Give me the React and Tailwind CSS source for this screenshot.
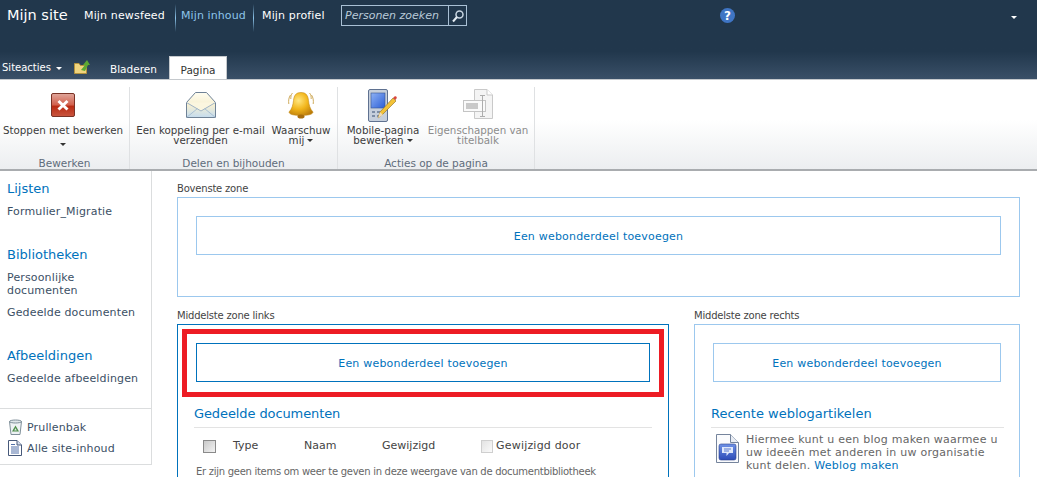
function Caret({ className = 'border-t-[#333]' }) {
    return <span className={`inline-block w-0 h-0 border-x-[3px] border-x-transparent border-t-[3px] ${className}`} />
}

function StopIcon() {
    return (
        <svg width="24" height="24" viewBox="0 0 24 24">
            <defs>
                <linearGradient id="stopBg" x1="0" y1="0" x2="0" y2="1">
                    <stop offset="0" stopColor="#e0a79c" />
                    <stop offset="0.5" stopColor="#d2604c" />
                    <stop offset="0.55" stopColor="#b92a12" />
                    <stop offset="1" stopColor="#c9563f" />
                </linearGradient>
            </defs>
            <rect x="0.5" y="0.5" width="23" height="23" rx="1.5" fill="url(#stopBg)" stroke="#7a3326" />
            <path d="M7.500 8l9 8.500M16.500 8l-9 8.500" stroke="#fff" strokeWidth="3" />
        </svg>
    )
}

function MailIcon() {
    return (
        <svg width="30" height="26" viewBox="0 0 30 26">
            <defs>
                <linearGradient id="mailBg" x1="0" y1="0" x2="0" y2="1">
                    <stop offset="0" stopColor="#fffdf0" />
                    <stop offset="0.5" stopColor="#f7f0d2" />
                    <stop offset="1" stopColor="#c4dcef" />
                </linearGradient>
            </defs>
            <path d="M0.5 10.5L9.5 0.5H20.5L29.5 10.5V25.5H0.5Z" fill="url(#mailBg)" stroke="#6f8296" />
            <path d="M0.5 10.5L15 19L29.5 10.5" fill="#fbf6df" stroke="#9fb3c6" />
            <path d="M0.5 25.5L11.5 16.5M29.5 25.5L18.5 16.5" fill="none" stroke="#a8bfd3" />
        </svg>
    )
}

function BellIcon() {
    return (
        <svg width="26" height="28" viewBox="0 0 26 28">
            <defs>
                <radialGradient id="bellBg" cx="0.4" cy="0.35" r="0.75">
                    <stop offset="0" stopColor="#ffe680" />
                    <stop offset="0.5" stopColor="#f2b61c" />
                    <stop offset="1" stopColor="#b8780a" />
                </radialGradient>
            </defs>
            <path d="M13 1.500C7.500 1.500 6 5 5.500 9.500 5 14 4 18 1 21 1 23.500 6.500 24.500 13 24.500S25 23.500 25 21C22 18 21 14 20.500 9.500 20 5 18.500 1.500 13 1.500z" fill="url(#bellBg)" stroke="#c68d1a" strokeWidth="0.6" />
            <ellipse cx="13" cy="25.500" rx="3.500" ry="2" fill="#a96d0c" />
            <path d="M2.500 4C0.800 6.500 0.300 9.500 0.800 13M4.500 2C3 3.500 2.800 5.500 2.800 8M23.500 4c1.700 2.500 2.200 5.500 1.700 9M21.500 2c1.500 1.500 1.700 3.500 1.700 6" fill="none" stroke="#c9a24a" strokeWidth="0.9" />
        </svg>
    )
}

function PhoneIcon() {
    return (
        <svg width="30" height="33" viewBox="0 0 30 33">
            <defs>
                <linearGradient id="phoneScr" x1="0" y1="0" x2="1" y2="1">
                    <stop offset="0" stopColor="#8db1f5" />
                    <stop offset="1" stopColor="#2d5fd6" />
                </linearGradient>
            </defs>
            <rect x="0.5" y="0.5" width="19" height="32" rx="1.500" fill="#c6cfdc" stroke="#5f7190" />
            <rect x="3" y="4" width="14" height="15" fill="url(#phoneScr)" stroke="#36548f" strokeWidth="0.6" />
            <path d="M4 22h3v2H4zM9 22h3v2H9zM14 22h2v2h-2zM4 26h3v2H4zM9 26h3v2H9z" fill="#7d8da6" />
            <path d="M10 29l2-6L25 9l3 3-14 14z" fill="#f3c237" stroke="#8a6b23" strokeWidth="0.6" />
            <path d="M25 9l1.500-1.500c.8-.6 1.600-.4 2 .2s.4 1.300 0 1.800L27.500 11z" fill="#d8473f" />
            <path d="M10 29l2-6 3 3z" fill="#f0dcb5" />
        </svg>
    )
}

function TitleBarIcon() {
    return (
        <svg width="30" height="33" viewBox="0 0 30 33">
            <path d="M11.500 0.500H24L29.500 6V29.500H11.500Z" fill="#f4f4f4" stroke="#c9c9c9" />
            <path d="M24 0.500V6H29.500" fill="#fff" stroke="#c9c9c9" />
            <rect x="0.500" y="11.500" width="22" height="11" fill="#fafafa" stroke="#c4c4c4" />
            <rect x="3" y="14" width="12" height="6" fill="#c9c9c9" />
            <path d="M17 6.500h5M19.500 6.500v21M17 27.500h5" fill="none" stroke="#adadad" />
        </svg>
    )
}

function FolderIcon() {
    return (
        <svg width="16" height="14" viewBox="0 0 16 14">
            <path d="M0.500 3.500V13.500H12.500V5.500H6.500L5 3.500Z" fill="#f0d47e" stroke="#b4933d" />
            <path d="M7 10l4-5H9l4-5 3 5h-2l-3 6z" fill="#5da832" />
        </svg>
    )
}

function HelpIcon() {
    return (
        <div className="w-[15px] h-[15px] rounded-full bg-[#3f75c4] flex items-center justify-center text-white text-[12px] font-bold leading-none">?</div>
    )
}

function SearchIcon() {
    return (
        <svg width="14" height="14" viewBox="0 0 14 14">
            <circle cx="8.500" cy="5.500" r="3.500" fill="none" stroke="#c9d6e2" strokeWidth="1.500" />
            <path d="M6 8l-4 4.500" stroke="#e6edf3" strokeWidth="2" />
        </svg>
    )
}

function TrashIcon() {
    return (
        <svg width="15" height="16" viewBox="0 0 15 16">
            <path d="M1.500 2.500H13.500L12 15.500H3Z" fill="#eef2f4" stroke="#7f8f99" />
            <ellipse cx="7.500" cy="2.500" rx="6" ry="1.500" fill="#dfe6ea" stroke="#7f8f99" />
            <path d="M7.500 6.500L11 12.500H4Z" fill="#4f8f4a" />
            <path d="M7.500 9L8.800 11.500H6.200Z" fill="#dfe6ea" />
        </svg>
    )
}

function DocIcon() {
    return (
        <svg width="14" height="16" viewBox="0 0 14 16">
            <path d="M0.500 0.500H9L13.500 5V15.500H0.500Z" fill="#fff" stroke="#47597a" />
            <path d="M9 0.500V5H13.500" fill="#d6dfee" stroke="#47597a" />
            <path d="M3 4.500h4M3 7h8M3 9h8M3 11h8M3 13h8" stroke="#5271a8" />
        </svg>
    )
}

function BlogIcon() {
    return (
        <svg width="23" height="29" viewBox="0 0 23 29">
            <defs>
                <linearGradient id="blogBg" x1="0" y1="0" x2="0" y2="1">
                    <stop offset="0" stopColor="#6f92e6" />
                    <stop offset="1" stopColor="#2c4bb8" />
                </linearGradient>
            </defs>
            <path d="M0.500 0.500H14.500L22.500 8.500V28.500H0.500Z" fill="#fafbfd" stroke="#75849c" />
            <path d="M14.500 0.500V8.500H22.500" fill="#e9edf4" stroke="#75849c" />
            <rect x="3" y="10" width="17" height="16" rx="2" fill="url(#blogBg)" stroke="#2b3f8c" strokeWidth="0.6" />
            <path d="M6 13h11v6h-4l-2.500 3v-3H6z" fill="#dfe8fb" />
            <path d="M8 15h7M8 17h5" stroke="#5e7ccf" />
        </svg>
    )
}

function RibbonButton({ icon, lines, caret, disabled, width }) {
    return (
        <div className={`flex flex-col items-center shrink-0 ${width} ${disabled ? 'text-[#8c8c8c]' : 'text-[#3b3b3b]'}`}>
            <div className="h-[36px] flex items-center justify-center">{icon}</div>
            <div className="mt-[2px] text-[10.3px] leading-[10px] text-center whitespace-nowrap">
                <div>{lines[0]}</div>
                {lines[1] && (
                    <div className="flex items-center justify-center gap-[3px]">
                        {lines[1]}
                        {caret && <Caret />}
                    </div>
                )}
            </div>
        </div>
    )
}

function RibbonGroup({ width, label, children }) {
    return (
        <div className={`${width} shrink-0 h-full flex flex-col border-r border-[#dfe1e3]`}>
            <div className="flex-1 flex items-start">{children}</div>
            <div className="h-[16px] mb-[-2px] text-center text-[10.500px] leading-[16px] text-[#5f6c7b]">{label}</div>
        </div>
    )
}

function NavHeading({ children, className = '' }) {
    return <div className={`text-[13px] leading-[16px] text-[#0072bc] ${className}`}>{children}</div>
}

function NavLink({ children, className = '' }) {
    return <div className={`text-[11px] leading-[13px] tracking-[0.15px] text-[#3b4f65] ${className}`}>{children}</div>
}

function AddWebPart({ dark }) {
    return (
        <div className={`h-[39px] pt-[3px] border flex items-center justify-center text-[11px] tracking-[0.2px] text-[#0072bc] ${dark ? 'border-[#0072bc]' : 'border-[#9cc8ee]'}`}>
            Een webonderdeel toevoegen
        </div>
    )
}

function ZoneTitle({ children }) {
    return <div className="h-[14px] text-[10px] leading-[12px] text-[#444] tracking-[-0.2px]">{children}</div>
}

export default function App() {
    return (
        <div className="w-[1037px] h-[477px] overflow-hidden bg-white font-['DejaVu_Sans',sans-serif]">
            {/* Top bar */}
            <div className="h-[80px] bg-gradient-to-b from-[#21374c] from-[65%] to-[#3a5068] border-b border-[#c5c9cd] flex flex-col">
                <div className="h-[58px] flex items-start text-white">
                    <div className="ml-[7px] mt-[5px] text-[14.500px] leading-[20px] w-[77px]">Mijn site</div>
                    <div className="mt-[9px] text-[11px] leading-[14px] tracking-[0.15px] w-[91px]">Mijn newsfeed</div>
                    <div className="mt-[4px] h-[28px] w-px bg-gradient-to-b from-transparent via-[#8cc4ea] to-transparent" />
                    <div className="ml-[5px] mt-[9px] text-[11px] leading-[14px] tracking-[0.1px] text-[#8cc4ea] w-[72px]">Mijn inhoud</div>
                    <div className="mt-[4px] h-[28px] w-px bg-gradient-to-b from-transparent via-[#8cc4ea] to-transparent" />
                    <div className="ml-[8px] mt-[9px] text-[11px] leading-[14px] tracking-[0.15px] w-[79px]">Mijn profiel</div>
                    <div className="mt-[5px] w-[126px] h-[21px] border border-[#a9c0d5] flex">
                        <div className="w-[107px] border-r border-[#a9c0d5] pl-[3px] text-[11px] leading-[19px] italic text-[#b9cad8]">Personen zoeken</div>
                        <div className="flex-1 flex items-center justify-center"><SearchIcon /></div>
                    </div>
                    <div className="ml-[253px] mt-[8px]"><HelpIcon /></div>
                    <div className="ml-[276px] mt-[16px] flex"><Caret className="border-t-white" /></div>
                </div>
                <div className="flex-1 flex items-start text-white text-[10.500px]">
                    <div className="ml-[2px] mt-[5px] w-[72px] flex items-center gap-[5px] leading-[14px] text-[10px]">
                        Siteacties
                        <Caret className="border-t-white" />
                    </div>
                    <div className="mt-[4px] w-[36px]"><FolderIcon /></div>
                    <div className="mt-[6px] w-[59px] leading-[14px]">Bladeren</div>
                    <div className="w-[58px] h-[23px] bg-white border-x border-t border-[#c5c9cd] text-[#333] text-center leading-[26px]">Pagina</div>
                </div>
            </div>

            {/* Ribbon */}
            <div className="h-[91px] pt-[7px] bg-gradient-to-b from-white from-[45%] to-[#eceef0] border-b-2 border-[#a9acaf] flex">
                <RibbonGroup width="w-[130px]" label="Bewerken">
                    <div className="w-[126px] flex flex-col items-center text-[#3b3b3b]">
                        <div className="h-[36px] flex items-center"><StopIcon /></div>
                        <div className="mt-[2px] text-[10.3px] leading-[10px] whitespace-nowrap">Stoppen met bewerken</div>
                        <div className="mt-[8px] flex"><Caret /></div>
                    </div>
                </RibbonGroup>
                <RibbonGroup width="w-[208px]" label="Delen en bijhouden">
                    <RibbonButton width="w-[141px]" icon={<MailIcon />} lines={['Een koppeling per e-mail', 'verzenden']} />
                    <RibbonButton width="w-[60px]" icon={<BellIcon />} lines={['Waarschuw', 'mij']} caret />
                </RibbonGroup>
                <RibbonGroup width="w-[197px]" label="Acties op de pagina">
                    <RibbonButton width="w-[90px]" icon={<PhoneIcon />} lines={['Mobile-pagina', 'bewerken']} caret />
                    <RibbonButton width="w-[100px]" icon={<TitleBarIcon />} lines={['Eigenschappen van', 'titelbalk']} disabled />
                </RibbonGroup>
            </div>

            {/* Body */}
            <div className="flex">
                {/* Left nav */}
                <div className="w-[152px] shrink-0 h-[294px] border-r border-b border-[#dbddde] flex flex-col pt-[10px] pl-[7px]">
                    <NavHeading>Lijsten</NavHeading>
                    <NavLink className="mt-[8px]">Formulier_Migratie</NavLink>
                    <NavHeading className="mt-[29px]">Bibliotheken</NavHeading>
                    <NavLink className="mt-[8px]">Persoonlijke<br />documenten</NavLink>
                    <NavLink className="mt-[9px]">Gedeelde documenten</NavLink>
                    <NavHeading className="mt-[29px]">Afbeeldingen</NavHeading>
                    <NavLink className="mt-[8px]">Gedeelde afbeeldingen</NavLink>
                    <div className="mt-[23px] -ml-[7px] border-t border-[#dbddde] pt-[10px] pl-[8px] flex flex-col gap-[5px]">
                        <div className="flex items-center gap-[4px]"><TrashIcon /><NavLink>Prullenbak</NavLink></div>
                        <div className="flex items-center gap-[5px]"><DocIcon /><NavLink>Alle site-inhoud</NavLink></div>
                    </div>
                </div>

                {/* Zones */}
                <div className="flex-1 pl-[25px] pr-[17px] pt-[12px] flex flex-col">
                    <ZoneTitle>Bovenste zone</ZoneTitle>
                    <div className="h-[100px] border border-[#9cc8ee] pt-[18px] px-[18px]">
                        <AddWebPart />
                    </div>
                    <div className="mt-[13px] flex gap-[25px]">
                        <div className="w-[492px] shrink-0">
                            <ZoneTitle>Middelste zone links</ZoneTitle>
                            <div className="relative h-[200px] border border-[#0072bc] pt-[18px] px-[18px]">
                                <AddWebPart dark />
                                <div className="absolute left-[4px] top-[4px] w-[482px] h-[68px] border-[5px] border-[#ed1c24]" />
                                <div className="mt-[23px] -ml-[2px] mr-[-2px] pb-[4px] border-b border-[#e3e3e3] text-[13px] leading-[18px] tracking-[-0.1px] text-[#0072bc]">Gedeelde documenten</div>
                                <div className="mt-[11px] flex items-center text-[11px] text-[#444] leading-[14px]">
                                    <div className="ml-[7px] w-[13px] h-[13px] border border-[#8a8a8a] bg-gradient-to-br from-[#c9c9c9] to-[#f3f3f3]" />
                                    <div className="ml-[17px] w-[71px]">Type</div>
                                    <div className="w-[78px]">Naam</div>
                                    <div className="w-[99px]">Gewijzigd</div>
                                    <div className="w-[12px] h-[13px] border border-[#cfcfcf] bg-gradient-to-br from-[#e3e3e3] to-[#fafafa]" />
                                    <div className="ml-[3px] tracking-[0.2px]">Gewijzigd door</div>
                                </div>
                                <div className="mt-[12px] text-[10px] leading-[13px] text-[#666] whitespace-nowrap tracking-[-0.28px]">Er zijn geen items om weer te geven in deze weergave van de documentbibliotheek</div>
                            </div>
                        </div>
                        <div className="flex-1">
                            <ZoneTitle>Middelste zone rechts</ZoneTitle>
                            <div className="h-[200px] border border-[#9cc8ee] pt-[18px] px-[18px]">
                                <AddWebPart />
                                <div className="mt-[23px] -ml-[2px] mr-[-3px] pb-[4px] border-b border-[#e3e3e3] text-[13px] leading-[18px] text-[#0072bc]">Recente weblogartikelen</div>
                                <div className="mt-[5px] ml-[3px] flex gap-[7px]">
                                    <div className="mt-[1px]"><BlogIcon /></div>
                                    <div className="text-[11px] leading-[13px] tracking-[0.25px] text-[#666] whitespace-nowrap">
                                        Hiermee kunt u een blog maken waarmee u<br />
                                        uw ideeën met anderen in uw organisatie<br />
                                        kunt delen. <span className="text-[#0072bc]">Weblog maken</span>
                                    </div>
                                </div>
                            </div>
                        </div>
                    </div>
                </div>
            </div>
        </div>
    )
}
